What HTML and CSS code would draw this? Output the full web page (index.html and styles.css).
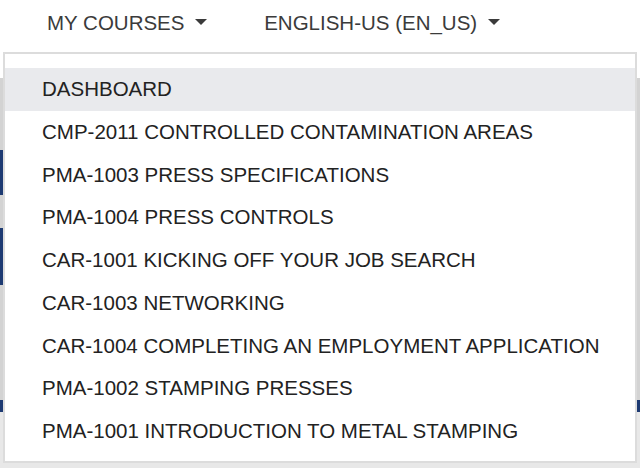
FILE: index.html
```html
<!DOCTYPE html>
<html>
<head>
<meta charset="utf-8">
<link rel="stylesheet" href="styles.css">
</head>
<body>
<header class="topbar">
  <nav class="nav">
    <a class="nav-link courses">MY COURSES <span class="caret"></span></a>
    <a class="nav-link lang">ENGLISH-US (EN_US) <span class="caret"></span></a>
  </nav>
  <ul class="dropdown">
    <li class="item active">DASHBOARD</li>
    <li class="item">CMP-2011 CONTROLLED CONTAMINATION AREAS</li>
    <li class="item">PMA-1003 PRESS SPECIFICATIONS</li>
    <li class="item">PMA-1004 PRESS CONTROLS</li>
    <li class="item">CAR-1001 KICKING OFF YOUR JOB SEARCH</li>
    <li class="item">CAR-1003 NETWORKING</li>
    <li class="item">CAR-1004 COMPLETING AN EMPLOYMENT APPLICATION</li>
    <li class="item">PMA-1002 STAMPING PRESSES</li>
    <li class="item">PMA-1001 INTRODUCTION TO METAL STAMPING</li>
  </ul>
</header>
<main class="hero">
  <div class="hero-top"></div>
  <div class="hero-logo">
    <div class="logo-a"></div>
    <div class="logo-gap"></div>
    <div class="logo-b"></div>
  </div>
  <div class="hero-mid"></div>
  <div class="hero-band"></div>
  <div class="hero-bottom"></div>
</main>
</body>
</html>
```
FILE: styles.css
```css
html, body {
  margin: 0;
  padding: 0;
  background: #ffffff;
  font-family: "Liberation Sans", Arial, sans-serif;
  overflow: hidden;
  height: 468px;
}

.topbar {
  position: relative;
  height: 78px;
}

.nav {
  display: flex;
  align-items: center;
  height: 46px;
  padding-left: 47px;
}

.nav-link {
  display: flex;
  align-items: center;
  font-size: 20.5px;
  color: #3b3b3b;
  text-decoration: none;
  white-space: pre;
}

.courses {
  margin-right: 57px;
}

.caret {
  display: inline-block;
  width: 0;
  height: 0;
  margin-left: 5px;
  border-top: 6px solid #3b3b3b;
  border-left: 6px solid transparent;
  border-right: 6px solid transparent;
  margin-top: -2px;
}

.dropdown {
  position: absolute;
  top: 52px;
  left: 3px;
  width: 630px;
  margin: 0;
  padding: 14px 0 8px;
  list-style: none;
  background: #ffffff;
  border: 2px solid #dcdcdc;
  z-index: 10;
}

.item {
  height: 42.75px;
  line-height: 42.75px;
  padding-left: 37px;
  font-size: 20.5px;
  color: #222222;
  white-space: nowrap;
}

.item.active {
  background: #e9eaed;
}

.hero {
  background: #d3d3d3;
  height: 390px;
  display: flex;
  flex-direction: column;
}

.hero-top {
  height: 72px;
}

.hero-logo {
  display: flex;
  flex-direction: column;
}

.logo-a {
  height: 45px;
  width: 30px;
  background: #1d3a72;
}

.logo-gap {
  height: 33px;
}

.logo-b {
  height: 57px;
  width: 30px;
  background: #1d3a72;
}

.hero-mid {
  height: 115px;
}

.hero-band {
  height: 12px;
  background: #1d3a72;
}

.hero-bottom {
  flex: 1;
  background: #e8e8e8;
}
```
